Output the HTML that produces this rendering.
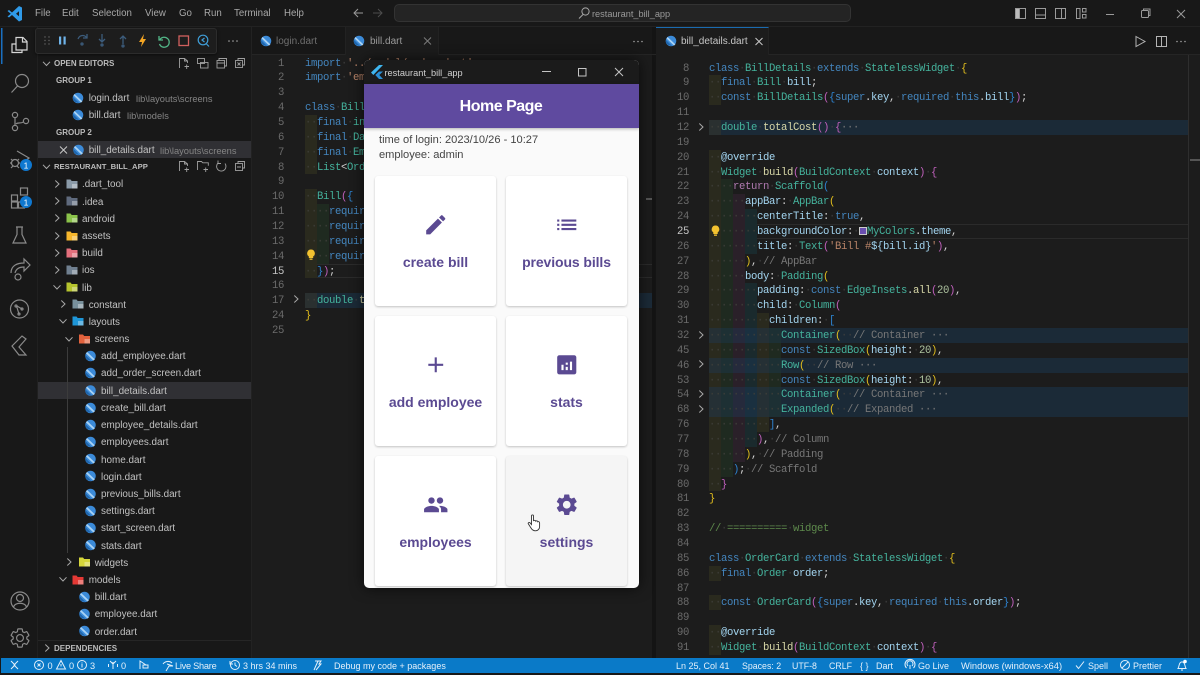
<!DOCTYPE html>
<html><head><meta charset="utf-8"><title>restaurant_bill_app</title>
<style>
*{box-sizing:border-box}
html,body{margin:0;padding:0;background:#181818}
#root{position:relative;width:1200px;height:675px;overflow:hidden;background:#181818;font-family:"Liberation Sans",sans-serif;filter:blur(.35px)}
.a{position:absolute}
.t{position:absolute;white-space:pre;line-height:14px;font-size:9.9px;color:#c2c2c2}
.h{font-weight:bold;font-size:8px;color:#bcbcbc}
.dim{color:#858585;font-size:9.3px}
.m{color:#a8a8a8;font-size:9.7px}
.s{color:#e4f0fa;font-size:9.2px}
.pane{position:absolute;font-family:"Liberation Mono",monospace;font-size:10.6px;letter-spacing:-.36px;color:#d4d4d4;overflow:hidden}
.r{height:14.87px;line-height:16.87px;position:relative;white-space:pre}
.r b{position:absolute;left:0;top:0;text-align:right;font-weight:normal;color:#6b6b6b;font-size:10.6px}
.r b.cur{color:#c6c6c6}
#L .r{padding-left:55px}#L .r b{width:34px}
#R .r{padding-left:53px}#R .r b{width:33px}
.fd{background:#1b2a37;background-clip:content-box}
.cl{box-shadow:none;background:linear-gradient(#2b2b2b,#2b2b2b) top/100% 1px no-repeat,linear-gradient(#2b2b2b,#2b2b2b) bottom/100% 1px no-repeat;background-origin:content-box;background-clip:content-box}
i{font-style:normal;display:inline-block;height:14.87px;vertical-align:top;color:#3f3f3a}
i.A{background:#2a2a1e}i.B{background:#1f2a20}i.C{background:#2a2029}i.D{background:#1a2a2d}
u{text-decoration:none;color:#3e3e3e}
.k{color:#4486bf}.c{color:#45b39d}.v{color:#a3d5f0}.f{color:#d8d8a8}.p{color:#cfcfcf}
.y{color:#e3bf1c}.mg{color:#c060bc}.bl{color:#2d84d2}.g{color:#777}.o{color:#b98468}.n{color:#adc29f}.gc{color:#5e8a4c}.kw2{color:#b07ab0}
.card{position:absolute;width:121px;height:130px;background:#fff;border-radius:3px;box-shadow:0 1px 2px rgba(0,0,0,.22)}
.lab{position:absolute;left:0;right:0;top:78px;text-align:center;font-weight:bold;font-size:14px;line-height:16px;color:#5b4a92}
.card svg{position:absolute;left:47.75px;top:35.75px}
</style></head>
<body><div id="root">

<!-- structure backgrounds -->
<div class="a" style="left:252px;top:54px;width:400px;height:604px;background:#1c1c1c"></div>
<div class="a" style="left:656px;top:54px;width:544px;height:604px;background:#1c1c1c"></div>
<div class="a" style="left:652px;top:27px;width:4px;height:631px;background:#141414"></div>
<div class="a" style="left:251px;top:27px;width:1px;height:631px;background:#222"></div>
<div class="a" style="left:37px;top:27px;width:1px;height:631px;background:#202020"></div>
<div class="a" style="left:252px;top:54px;width:948px;height:1px;background:#252525"></div>
<div class="a" style="left:0;top:26px;width:1200px;height:1px;background:#222"></div>
<!-- tabs -->
<div class="a" style="left:252px;top:27px;width:93px;height:27px;background:#171717"></div>
<div class="a" style="left:345px;top:27px;width:94px;height:28px;background:#1c1c1c;border-left:1px solid #222;border-right:1px solid #222"></div>
<div class="a" style="left:656px;top:27px;width:113px;height:28px;background:#1c1c1c;border-right:1px solid #222;border-top:1px solid #1a6bb0"></div>
<div class="t" style="left:276px;top:35px;color:#6f6f6f;font-size:10px">login.dart</div>
<div class="t" style="left:370px;top:35px;color:#9a9a9a;font-size:10px">bill.dart</div>
<div class="t" style="left:681px;top:35px;color:#c6c6c6;font-size:10px">bill_details.dart</div>
<!-- selected rows -->
<div class="a" style="left:38px;top:141px;width:213px;height:17px;background:#303034"></div>
<div class="a" style="left:38px;top:381.5px;width:213px;height:17px;background:#303034"></div>
<div class="a" style="left:38px;top:640px;width:213px;height:1px;background:#262626"></div>
<div class="a" style="left:67px;top:347px;width:1px;height:206px;background:#3c3c3c"></div>

<!-- menu -->
<div class="t m" style="left:35px;top:7px">File</div>
<div class="t m" style="left:62px;top:7px">Edit</div>
<div class="t m" style="left:92px;top:7px">Selection</div>
<div class="t m" style="left:145px;top:7px">View</div>
<div class="t m" style="left:179px;top:7px">Go</div>
<div class="t m" style="left:204px;top:7px">Run</div>
<div class="t m" style="left:234px;top:7px">Terminal</div>
<div class="t m" style="left:284px;top:7px">Help</div>
<div class="a" style="left:394px;top:4px;width:457px;height:18px;background:#242424;border:1px solid #333;border-radius:5px"></div>
<div class="t" style="left:592px;top:7px;color:#9a9a9a;font-size:9.2px">restaurant_bill_app</div>

<!-- debug toolbar -->
<div class="a" style="left:35px;top:28px;width:182px;height:26px;background:#1d1d1d;border:1px solid #2c2c2c;border-radius:3px;box-shadow:0 1px 3px rgba(0,0,0,.5)"></div>

<!-- sidebar text -->
<div class="t h" style="left:54px;top:56.5px">OPEN EDITORS</div>
<div class="t h" style="left:56px;top:73.5px">GROUP 1</div>
<div class="t" style="left:88.7px;top:91.5px">login.dart</div><div class="t dim" style="left:136px;top:91.5px">lib\layouts\screens</div>
<div class="t" style="left:88.7px;top:108.5px">bill.dart</div><div class="t dim" style="left:127px;top:108.5px">lib\models</div>
<div class="t h" style="left:56px;top:125.5px">GROUP 2</div>
<div class="t" style="left:88.7px;top:144px">bill_details.dart</div><div class="t dim" style="left:160px;top:144px">lib\layouts\screens</div>
<div class="t h" style="left:54px;top:160px;font-size:7.7px">RESTAURANT_BILL_APP</div>
<div class="a" style="left:0;top:1px;width:0;height:0">
<div class="t" style="left:82px;top:177px">.dart_tool</div>
<div class="t" style="left:82px;top:194.5px">.idea</div>
<div class="t" style="left:82px;top:211.5px">android</div>
<div class="t" style="left:82px;top:229px">assets</div>
<div class="t" style="left:82px;top:246px">build</div>
<div class="t" style="left:82px;top:263px">ios</div>
<div class="t" style="left:82px;top:280.5px">lib</div>
<div class="t" style="left:88.7px;top:297.5px">constant</div>
<div class="t" style="left:88.7px;top:315px">layouts</div>
<div class="t" style="left:94.7px;top:332px">screens</div>
<div class="t" style="left:101px;top:349px">add_employee.dart</div>
<div class="t" style="left:101px;top:366px">add_order_screen.dart</div>
<div class="t" style="left:101px;top:383.5px">bill_details.dart</div>
<div class="t" style="left:101px;top:401px">create_bill.dart</div>
<div class="t" style="left:101px;top:418px">employee_details.dart</div>
<div class="t" style="left:101px;top:435px">employees.dart</div>
<div class="t" style="left:101px;top:452.5px">home.dart</div>
<div class="t" style="left:101px;top:469.5px">login.dart</div>
<div class="t" style="left:101px;top:487px">previous_bills.dart</div>
<div class="t" style="left:101px;top:504px">settings.dart</div>
<div class="t" style="left:101px;top:521px">start_screen.dart</div>
<div class="t" style="left:101px;top:538.5px">stats.dart</div>
<div class="t" style="left:94.7px;top:555.5px">widgets</div>
<div class="t" style="left:88.7px;top:573px">models</div>
<div class="t" style="left:94.7px;top:590px">bill.dart</div>
<div class="t" style="left:94.7px;top:607px">employee.dart</div>
<div class="t" style="left:94.7px;top:624.5px">order.dart</div>
</div>
<div class="t h" style="left:54px;top:641.5px">DEPENDENCIES</div>

<!-- left code -->
<div class="pane" id="L" style="left:250px;top:55.5px;width:402px;height:300px">
<div class="r"><b>1</b><span class="k">import</span><u>·</u><span class="o">'../model/order.dart'</span><span class="p">;</span></div>
<div class="r"><b>2</b><span class="k">import</span><u>·</u><span class="o">'employee.dart'</span><span class="p">;</span></div>
<div class="r"><b>3</b></div>
<div class="r"><b>4</b><span class="k">class</span><u>·</u><span class="c">Bill</span><u>·</u><span class="y">{</span></div>
<div class="r"><b>5</b><i class="A">··</i><span class="k">final</span><u>·</u><span class="c">int</span><u>·</u><span class="v">id</span>;</div>
<div class="r"><b>6</b><i class="A">··</i><span class="k">final</span><u>·</u><span class="c">DateTime</span><u>·</u><span class="v">time</span>;</div>
<div class="r"><b>7</b><i class="A">··</i><span class="k">final</span><u>·</u><span class="c">Employee</span><u>·</u><span class="v">employee</span>;</div>
<div class="r"><b>8</b><i class="A">··</i><span class="c">List</span><span class="p">&lt;</span><span class="c">Order</span><span class="p">&gt;</span><u>·</u><span class="v">orders</span>;</div>
<div class="r"><b>9</b></div>
<div class="r"><b>10</b><i class="A">··</i><span class="c">Bill</span><span class="mg">(</span><span class="bl">{</span></div>
<div class="r"><b>11</b><i class="A">··</i><i class="B">··</i><span class="k">required</span><u>·</u><span class="k">this</span>.id,</div>
<div class="r"><b>12</b><i class="A">··</i><i class="B">··</i><span class="k">required</span><u>·</u><span class="k">this</span>.time,</div>
<div class="r"><b>13</b><i class="A">··</i><i class="B">··</i><span class="k">required</span><u>·</u><span class="k">this</span>.employee,</div>
<div class="r"><b>14</b><i class="A">··</i><i class="B">··</i><span class="k">required</span><u>·</u><span class="k">this</span>.orders,</div>
<div class="r cl"><b class="cur">15</b><i class="A">··</i><span class="bl">}</span><span class="mg">)</span><span class="p">;</span></div>
<div class="r"><b>16</b></div>
<div class="r fd"><b>17</b><i class="A" style="background:#2a3030">··</i><span class="c">double</span><u>·</u><span class="f">totalCost</span><span class="mg">()</span><u>·</u><span class="mg">{</span><span class="g">···</span></div>
<div class="r"><b>24</b><span class="y">}</span></div>
<div class="r"><b>25</b></div>
</div>

<!-- right code -->
<div class="pane" id="R" style="left:656px;top:60.5px;width:532px;height:597px">
<div class="r"><b>8</b><span class="k">class</span><u>·</u><span class="c">BillDetails</span><u>·</u><span class="k">extends</span><u>·</u><span class="c">StatelessWidget</span><u>·</u><span class="y">{</span></div>
<div class="r"><b>9</b><i class="A">··</i><span class="k">final</span><u>·</u><span class="c">Bill</span><u>·</u><span class="v">bill</span>;</div>
<div class="r"><b>10</b><i class="A">··</i><span class="k">const</span><u>·</u><span class="c">BillDetails</span><span class="mg">(</span><span class="bl">{</span><span class="k">super</span>.<span class="v">key</span>,<u>·</u><span class="k">required</span><u>·</u><span class="k">this</span>.<span class="v">bill</span><span class="bl">}</span><span class="mg">)</span>;</div>
<div class="r"><b>11</b></div>
<div class="r fd"><b>12</b><i class="A" style="background:#2a3030">··</i><span class="c">double</span><u>·</u><span class="f">totalCost</span><span class="mg">()</span><u>·</u><span class="mg">{</span><span class="g">···</span></div>
<div class="r"><b>19</b></div>
<div class="r"><b>20</b><i class="A">··</i><span class="v">@override</span></div>
<div class="r"><b>21</b><i class="A">··</i><span class="c">Widget</span><u>·</u><span class="f">build</span><span class="mg">(</span><span class="c">BuildContext</span><u>·</u><span class="v">context</span><span class="mg">)</span><u>·</u><span class="mg">{</span></div>
<div class="r"><b>22</b><i class="A">··</i><i class="B">··</i><span class="kw2">return</span><u>·</u><span class="c">Scaffold</span><span class="bl">(</span></div>
<div class="r"><b>23</b><i class="A">··</i><i class="B">··</i><i class="C">··</i><span class="v">appBar</span>:<u>·</u><span class="c">AppBar</span><span class="y">(</span></div>
<div class="r"><b>24</b><i class="A">··</i><i class="B">··</i><i class="C">··</i><i class="D">··</i><span class="v">centerTitle</span>:<u>·</u><span class="k">true</span>,</div>
<div class="r cl"><b class="cur">25</b><i class="A">··</i><i class="B">··</i><i class="C">··</i><i class="D">··</i><span class="v">backgroundColor</span>:<u>·</u><span style="display:inline-block;width:8px;height:8px;background:#6a4fb0;border:1px solid #ccc;margin:0 1px 0 0;vertical-align:-1px"></span><span class="c" style="margin-left:-1px">MyColors</span>.<span class="v">theme</span>,</div>
<div class="r"><b>26</b><i class="A">··</i><i class="B">··</i><i class="C">··</i><i class="D">··</i><span class="v">title</span>:<u>·</u><span class="c">Text</span><span class="mg">(</span><span class="o">'Bill #</span><span class="v">${bill.id}</span><span class="o">'</span><span class="mg">)</span>,</div>
<div class="r"><b>27</b><i class="A">··</i><i class="B">··</i><i class="C">··</i><span class="y">)</span>,<u>·</u><span class="g">// AppBar</span></div>
<div class="r"><b>28</b><i class="A">··</i><i class="B">··</i><i class="C">··</i><span class="v">body</span>:<u>·</u><span class="c">Padding</span><span class="y">(</span></div>
<div class="r"><b>29</b><i class="A">··</i><i class="B">··</i><i class="C">··</i><i class="D">··</i><span class="v">padding</span>:<u>·</u><span class="k">const</span><u>·</u><span class="c">EdgeInsets</span>.<span class="f">all</span><span class="mg">(</span><span class="n">20</span><span class="mg">)</span>,</div>
<div class="r"><b>30</b><i class="A">··</i><i class="B">··</i><i class="C">··</i><i class="D">··</i><span class="v">child</span>:<u>·</u><span class="c">Column</span><span class="mg">(</span></div>
<div class="r"><b>31</b><i class="A">··</i><i class="B">··</i><i class="C">··</i><i class="D">··</i><i class="A">··</i><span class="v">children</span>:<u>·</u><span class="bl">[</span></div>
<div class="r fd"><b>32</b><i class="A" style="background:#253035">··</i><i class="B" style="background:#1d3034">··</i><i class="C" style="background:#252a3c">··</i><i class="D" style="background:#1a3040">··</i><i class="A" style="background:#253035">··</i><i class="B" style="background:#1d3034">··</i><span class="c">Container</span><span class="y">(</span><u>··</u><span class="g">// Container ···</span></div>
<div class="r"><b>45</b><i class="A">··</i><i class="B">··</i><i class="C">··</i><i class="D">··</i><i class="A">··</i><i class="B">··</i><span class="k">const</span><u>·</u><span class="c">SizedBox</span><span class="y">(</span><span class="v">height</span>:<u>·</u><span class="n">20</span><span class="y">)</span>,</div>
<div class="r fd"><b>46</b><i class="A" style="background:#253035">··</i><i class="B" style="background:#1d3034">··</i><i class="C" style="background:#252a3c">··</i><i class="D" style="background:#1a3040">··</i><i class="A" style="background:#253035">··</i><i class="B" style="background:#1d3034">··</i><span class="c">Row</span><span class="y">(</span><u>··</u><span class="g">// Row ···</span></div>
<div class="r"><b>53</b><i class="A">··</i><i class="B">··</i><i class="C">··</i><i class="D">··</i><i class="A">··</i><i class="B">··</i><span class="k">const</span><u>·</u><span class="c">SizedBox</span><span class="y">(</span><span class="v">height</span>:<u>·</u><span class="n">10</span><span class="y">)</span>,</div>
<div class="r fd"><b>54</b><i class="A" style="background:#253035">··</i><i class="B" style="background:#1d3034">··</i><i class="C" style="background:#252a3c">··</i><i class="D" style="background:#1a3040">··</i><i class="A" style="background:#253035">··</i><i class="B" style="background:#1d3034">··</i><span class="c">Container</span><span class="y">(</span><u>··</u><span class="g">// Container ···</span></div>
<div class="r fd"><b>68</b><i class="A" style="background:#253035">··</i><i class="B" style="background:#1d3034">··</i><i class="C" style="background:#252a3c">··</i><i class="D" style="background:#1a3040">··</i><i class="A" style="background:#253035">··</i><i class="B" style="background:#1d3034">··</i><span class="c">Expanded</span><span class="y">(</span><u>··</u><span class="g">// Expanded ···</span></div>
<div class="r"><b>76</b><i class="A">··</i><i class="B">··</i><i class="C">··</i><i class="D">··</i><i class="A">··</i><span class="bl">]</span>,</div>
<div class="r"><b>77</b><i class="A">··</i><i class="B">··</i><i class="C">··</i><i class="D">··</i><span class="mg">)</span>,<u>·</u><span class="g">// Column</span></div>
<div class="r"><b>78</b><i class="A">··</i><i class="B">··</i><i class="C">··</i><span class="y">)</span>,<u>·</u><span class="g">// Padding</span></div>
<div class="r"><b>79</b><i class="A">··</i><i class="B">··</i><span class="bl">)</span>;<u>·</u><span class="g">// Scaffold</span></div>
<div class="r"><b>80</b><i class="A">··</i><span class="mg">}</span></div>
<div class="r"><b>81</b><span class="y">}</span></div>
<div class="r"><b>82</b></div>
<div class="r"><b>83</b><span class="gc">//<u>·</u>==========<u>·</u>widget</span></div>
<div class="r"><b>84</b></div>
<div class="r"><b>85</b><span class="k">class</span><u>·</u><span class="c">OrderCard</span><u>·</u><span class="k">extends</span><u>·</u><span class="c">StatelessWidget</span><u>·</u><span class="y">{</span></div>
<div class="r"><b>86</b><i class="A">··</i><span class="k">final</span><u>·</u><span class="c">Order</span><u>·</u><span class="v">order</span>;</div>
<div class="r"><b>87</b></div>
<div class="r"><b>88</b><i class="A">··</i><span class="k">const</span><u>·</u><span class="c">OrderCard</span><span class="mg">(</span><span class="bl">{</span><span class="k">super</span>.<span class="v">key</span>,<u>·</u><span class="k">required</span><u>·</u><span class="k">this</span>.<span class="v">order</span><span class="bl">}</span><span class="mg">)</span>;</div>
<div class="r"><b>89</b></div>
<div class="r"><b>90</b><i class="A">··</i><span class="v">@override</span></div>
<div class="r"><b>91</b><i class="A">··</i><span class="c">Widget</span><u>·</u><span class="f">build</span><span class="mg">(</span><span class="c">BuildContext</span><u>·</u><span class="v">context</span><span class="mg">)</span><u>·</u><span class="mg">{</span></div>
</div>
<div class="a" style="left:1188px;top:55px;width:1px;height:603px;background:#2e2e2e"></div>
<div class="a" style="left:1190px;top:159px;width:10px;height:2px;background:#555"></div>
<div class="a" style="left:646px;top:198px;width:6px;height:2px;background:#555"></div>

<!-- icon layer -->
<svg class="a" style="left:0;top:0" width="1200" height="675" viewBox="0 0 1200 675" fill="none">
<defs>
<symbol id="d" viewBox="0 0 12 12"><circle cx="6" cy="6" r="5.3" fill="#3b8ad8"/><path d="M2.6 2 L10.4 9.4 L9 10.6 L1.5 3.4z" fill="#a9d3f5"/><path d="M1 5 L7 11 L3 10 L1 8z" fill="#1f66ad"/></symbol>
<symbol id="cr" viewBox="0 0 10 10"><path d="M3.3 1.5 L7 5 L3.3 8.5" fill="none" stroke="#a8a8a8" stroke-width="1"/></symbol>
<symbol id="cd" viewBox="0 0 10 10"><path d="M1.5 3.3 L5 7 L8.5 3.3" fill="none" stroke="#a8a8a8" stroke-width="1"/></symbol>
<symbol id="fo" viewBox="0 0 12 12"><path d="M.5 1.5h4l1.2 1.5h5.8v7.5H.5z" fill="currentColor"/><rect x="6" y="6" width="5.5" height="4.5" fill="#fff" opacity=".35"/></symbol>
<symbol id="x" viewBox="0 0 10 10"><path d="M1.5 1.5 L8.5 8.5 M8.5 1.5 L1.5 8.5" stroke="currentColor" stroke-width="1"/></symbol>
</defs>

<!-- title bar -->
<path d="M9 10 L12 12.5 L19 6 L22 7.5 V20 L19 21.5 L12 15 L9 17.5 L7.5 16.5 L10.8 13.7 L7.5 11z" fill="#2f9ae8"/>
<path d="M16 13.7 L19 11.2 V16.2z" fill="#181818"/>
<g stroke="#9a9a9a" stroke-width="1"><path d="M354 13h9M358 9l-4 4 4 4"/></g>
<g stroke="#4d4d4d" stroke-width="1"><path d="M373 13h9M378 9l4 4-4 4"/></g>
<g stroke="#a8a8a8" stroke-width="1"><circle cx="585.5" cy="11.5" r="3.6"/><path d="M583 14.5 L579 18.5"/></g>
<g stroke="#9a9a9a" stroke-width="1"><rect x="1015.5" y="8.5" width="10" height="10"/><rect x="1015.5" y="8.5" width="4" height="10" fill="#bbb"/><rect x="1035.5" y="8.5" width="10" height="10"/><path d="M1035.5 15h10"/><rect x="1055.5" y="8.5" width="10" height="10"/><path d="M1061.5 8.5v10"/><rect x="1076.5" y="8.5" width="3.5" height="10"/><rect x="1082.5" y="8.5" width="3.5" height="3.5"/><rect x="1082.5" y="14.5" width="3.5" height="3.5"/><path d="M1106 14.5h8"/></g>
<g stroke="#9a9a9a" stroke-width="1"><rect x="1141.5" y="10.5" width="7" height="7" rx="1"/><path d="M1143.5 10.5v-1.5h6.5v6.5h-1.5"/><path d="M1177 10l8 8M1185 10l-8 8"/></g>

<!-- activity bar -->
<rect x="1" y="28" width="1.5" height="36" fill="#1a6fc0"/>
<g stroke="#d6d6d6" stroke-width="1.2"><path d="M16 44 H12 V52.5 H22 V50"/><path d="M16 37.5 H23 L27 41.5 V50 H16z"/><path d="M22.5 37.5 V42 H27"/></g>
<g stroke="#8a8a8a" stroke-width="1.2">
<circle cx="22" cy="81" r="6.5"/><path d="M17.5 86 L11.5 92.5"/>
<circle cx="15" cy="115" r="2.6"/><circle cx="15" cy="128" r="2.6"/><circle cx="26" cy="121" r="2.6"/><path d="M15 118v7.5M23.5 122 C20 124 17.5 122 16 124"/>
<path d="M17 151 L29 158 L22 163"/><circle cx="15" cy="163" r="3.5"/><path d="M10 163h2M18 163h2M11 159l2 2M19 159l-2 2M11 168l2-2M19 168l-2-2"/>
<rect x="11.5" y="195" width="6" height="6"/><rect x="11.5" y="202" width="6" height="6"/><rect x="18.5" y="202" width="6" height="6"/><rect x="20.5" y="188" width="7" height="7"/>
<path d="M16 227h7M17 227v7.5L13 243h13l-4-8.5V227"/>
<path d="M11 273 C11 265 18 263 24 263V259l6 6-6 6v-4 C19 267 16 269 15 273"/><circle cx="18" cy="277" r="3"/>
<circle cx="19.5" cy="309" r="9"/><circle cx="16" cy="306" r="1"/><circle cx="22" cy="309" r="1"/><circle cx="19" cy="314" r="1"/><path d="M16.5 306 L19 314M17 306 L22 309"/>
<path d="M22 336 L12 346 L19 355 H26 L19 347 L26 339z"/>
<circle cx="20" cy="601" r="9"/><circle cx="20" cy="598" r="3.5"/><path d="M13.5 607 C15 602 25 602 26.5 607"/>
<path transform="translate(8.6 626.6) scale(.95)" stroke-width="1.25" d="M19.14 12.94c.04-.3.06-.61.06-.94 0-.32-.02-.64-.07-.94l2.03-1.58c.18-.14.23-.41.12-.61l-1.92-3.32c-.12-.22-.37-.29-.59-.22l-2.39.96c-.5-.38-1.03-.7-1.62-.94l-.36-2.54c-.04-.24-.24-.41-.48-.41h-3.84c-.24 0-.43.17-.47.41l-.36 2.54c-.59.24-1.13.57-1.62.94l-2.39-.96c-.22-.08-.47 0-.59.22L2.74 8.87c-.12.21-.08.47.12.61l2.03 1.58c-.05.3-.09.63-.09.94s.02.64.07.94l-2.03 1.58c-.18.14-.23.41-.12.61l1.92 3.32c.12.22.37.29.59.22l2.39-.96c.5.38 1.03.7 1.62.94l.36 2.54c.05.24.24.41.48.41h3.84c.24 0 .44-.17.47-.41l.36-2.54c.59-.24 1.13-.56 1.62-.94l2.39.96c.22.08.47 0 .59-.22l1.92-3.32c.12-.22.07-.47-.12-.61l-2.01-1.58zM12 15.6c-1.98 0-3.6-1.62-3.6-3.6s1.62-3.6 3.6-3.6 3.6 1.62 3.6 3.6-1.62 3.6-3.6 3.6z"/></g>
<circle cx="26" cy="165" r="6" fill="#0f78d0"/><circle cx="26" cy="202" r="6" fill="#0f78d0"/>
<text x="26" y="168.5" text-anchor="middle" fill="#fff" font-family="Liberation Sans" font-size="8.5">1</text>
<text x="26" y="205.5" text-anchor="middle" fill="#fff" font-family="Liberation Sans" font-size="8.5">1</text>

<!-- debug toolbar icons -->
<g fill="#666"><circle cx="45" cy="37" r=".7"/><circle cx="49" cy="37" r=".7"/><circle cx="45" cy="40.5" r=".7"/><circle cx="49" cy="40.5" r=".7"/><circle cx="45" cy="44" r=".7"/><circle cx="49" cy="44" r=".7"/></g>
<rect x="59" y="36.5" width="2.2" height="8" fill="#6fb4ea"/><rect x="63.5" y="36.5" width="2.2" height="8" fill="#6fb4ea"/>
<g stroke="#3c5c7c" stroke-width="1.3"><path d="M78 39 C80 34 85 35 87 38M87 34v4h-4"/><circle cx="82" cy="44" r="1"/><path d="M102 34v8M99 39l3 3 3-3"/><circle cx="102" cy="45" r="1"/><path d="M123 44v-8M120 39l3-3 3 3"/><circle cx="123" cy="46" r="1"/></g>
<path d="M144 34 L139 42 H142 L141 47 L146 39 H143z" fill="#f5a623"/>
<path d="M159 36 V40 H163 M160 39.5 A5 5 0 1 1 159.5 44" stroke="#52b788" stroke-width="1.3"/>
<rect x="179" y="36" width="9.5" height="9.5" stroke="#d0605e" stroke-width="1.3"/>
<g stroke="#3f9ed8" stroke-width="1.2"><circle cx="203" cy="40" r="4.8"/><path d="M206.5 44 L209 46.5M204.5 38 L202 40 L204.5 42"/></g>
<g fill="#a8a8a8"><circle cx="229" cy="41" r=".8"/><circle cx="233" cy="41" r=".8"/><circle cx="237" cy="41" r=".8"/></g>

<!-- sidebar toolbar -->
<g stroke="#a0a0a0" stroke-width=".9">
<path d="M179.5 68 V58.5 H184.5 L187.5 61 V63 M184.5 58.5V61H187.5M184.5 66.5h4.5M186.7 64.5v4.5"/>
<rect x="197.5" y="58.5" width="7" height="5"/><rect x="200.5" y="62.5" width="7.5" height="5.5"/>
<rect x="217" y="60.5" width="7.5" height="7.5"/><path d="M219 60.5V58.5h7.5v7.5h-2M217 63h7.5"/>
<rect x="235.5" y="60.5" width="7" height="7"/><path d="M238 60.5V58.5h6.5v6.5h-2M237.5 62.5l3 3M240.5 62.5l-3 3"/>
<path d="M179.5 171 V161.5 H184.5 L187.5 164 V166 M184.5 161.5V164H187.5M184.5 169.5h4.5M186.7 167.5v4.5"/>
<path d="M197.5 170 V161.5H201.5l1.3 1.3h5.5v3M203.5 169.5h4.5M205.7 167.5v4.5"/>
<path d="M218 163 A4.7 4.7 0 1 0 225 163.5M218 160.5v3h3"/>
<rect x="235.5" y="163.5" width="7" height="7"/><path d="M238 163.5V161.5h6.5v6.5h-2M237 167h4"/>
</g>
<use href="#cd" x="41.5" y="58.5" width="10" height="10"/><use href="#cd" x="41.5" y="161.5" width="10" height="10"/><use href="#cr" x="42" y="643" width="10" height="10"/>
<use href="#d" x="72" y="92" width="12" height="12"/><use href="#d" x="72" y="109" width="12" height="12"/><use href="#d" x="72.5" y="144" width="12" height="12"/>
<use href="#x" x="58.5" y="145" width="10" height="10" style="color:#c8c8c8"/>
<use href="#d" x="260" y="35" width="12" height="12"/><use href="#d" x="353" y="35" width="12" height="12"/><use href="#d" x="665" y="35" width="12" height="12"/>
<use href="#x" x="422.5" y="36" width="10" height="10" style="color:#7a7a7a"/><use href="#x" x="754" y="36.5" width="10" height="10" style="color:#c8c8c8"/>
<g fill="#a0a0a0"><circle cx="634" cy="41.5" r=".8"/><circle cx="638" cy="41.5" r=".8"/><circle cx="642" cy="41.5" r=".8"/><circle cx="1177" cy="41.5" r=".8"/><circle cx="1181" cy="41.5" r=".8"/><circle cx="1185" cy="41.5" r=".8"/></g>
<path d="M1136 36.5 L1145 41.5 L1136 46.5z" stroke="#b4b4b4" stroke-width="1"/>
<rect x="1156.5" y="36.5" width="10" height="10" stroke="#b4b4b4"/><path d="M1161.5 36.5v10" stroke="#b4b4b4"/>

<!-- tree chevrons -->
<use href="#cr" x="52" y="179" width="10" height="10"/><use href="#cr" x="52" y="196" width="10" height="10"/><use href="#cr" x="52" y="213" width="10" height="10"/><use href="#cr" x="52" y="231" width="10" height="10"/><use href="#cr" x="52" y="248" width="10" height="10"/><use href="#cr" x="52" y="265" width="10" height="10"/><use href="#cd" x="52" y="282" width="10" height="10"/><use href="#cr" x="58" y="299" width="10" height="10"/><use href="#cd" x="58" y="316" width="10" height="10"/><use href="#cd" x="64" y="334" width="10" height="10"/><use href="#cr" x="64" y="557" width="10" height="10"/><use href="#cd" x="58" y="574" width="10" height="10"/>
<!-- folders -->
<use href="#fo" x="66" y="178" width="12" height="12" style="color:#8a9aa8"/><use href="#fo" x="66" y="195" width="12" height="12" style="color:#5f6a7d"/><use href="#fo" x="66" y="212" width="12" height="12" style="color:#8bc34a"/><use href="#fo" x="66" y="230" width="12" height="12" style="color:#f6b62c"/><use href="#fo" x="66" y="247" width="12" height="12" style="color:#e36f7c"/><use href="#fo" x="66" y="264" width="12" height="12" style="color:#708090"/><use href="#fo" x="66" y="281" width="12" height="12" style="color:#b6c42e"/><use href="#fo" x="72" y="298" width="12" height="12" style="color:#78909c"/><use href="#fo" x="72" y="315" width="12" height="12" style="color:#1e96d8"/><use href="#fo" x="78.5" y="333" width="12" height="12" style="color:#e2623d"/><use href="#fo" x="78.5" y="556" width="12" height="12" style="color:#d6d63a"/><use href="#fo" x="72" y="574" width="12" height="12" style="color:#e53935"/>
<!-- files -->
<use href="#d" x="84.5" y="350" width="12" height="12"/><use href="#d" x="84.5" y="367" width="12" height="12"/><use href="#d" x="84.5" y="384.5" width="12" height="12"/><use href="#d" x="84.5" y="402" width="12" height="12"/><use href="#d" x="84.5" y="419" width="12" height="12"/><use href="#d" x="84.5" y="436" width="12" height="12"/><use href="#d" x="84.5" y="453" width="12" height="12"/><use href="#d" x="84.5" y="470" width="12" height="12"/><use href="#d" x="84.5" y="488" width="12" height="12"/><use href="#d" x="84.5" y="505" width="12" height="12"/><use href="#d" x="84.5" y="522" width="12" height="12"/><use href="#d" x="84.5" y="539" width="12" height="12"/><use href="#d" x="78.5" y="591" width="12" height="12"/><use href="#d" x="78.5" y="608" width="12" height="12"/><use href="#d" x="78.5" y="625" width="12" height="12"/>
<!-- code fold + bulbs -->
<use href="#cr" x="291" y="294" width="10" height="10"/><use href="#cr" x="696" y="122" width="10" height="10"/><use href="#cr" x="696" y="330" width="10" height="10"/><use href="#cr" x="696" y="359" width="10" height="10"/><use href="#cr" x="696" y="389" width="10" height="10"/><use href="#cr" x="696" y="404" width="10" height="10"/>
<g fill="#f2c230"><path d="M311 249.5a3.8 3.8 0 0 1 2.2 6.9v1.6h-4.4v-1.6A3.8 3.8 0 0 1 311 249.5z"/><path d="M715.5 225.5a3.8 3.8 0 0 1 2.2 6.9v1.6h-4.4v-1.6A3.8 3.8 0 0 1 715.5 225.5z"/></g>
<rect x="309.5" y="258.5" width="3" height="1.3" fill="#f2c230"/><rect x="714" y="234.5" width="3" height="1.3" fill="#f2c230"/>
</svg>

<!-- flutter window -->
<div class="a" style="left:363.5px;top:60px;width:275px;height:528px;background:#fafafa;border-radius:5px;overflow:hidden;box-shadow:0 0 14px rgba(0,0,0,.65)">
<div class="a" style="left:0;top:0;width:275px;height:24px;background:#1b1b1b"></div>
<div class="t" style="left:21px;top:5.5px;color:#d0d0d0;font-size:9.2px">restaurant_bill_app</div>
<svg class="a" style="left:7px;top:5px" width="13" height="14" viewBox="0 0 13 14"><path d="M8 0 L0 7.5 2.3 10 L12 0z" fill="#3fb6f0"/><path d="M12 6.5 H8 L4.3 10 8 14 H12 L8.3 10z" fill="#2a8fd6"/></svg>
<svg class="a" style="left:0;top:0" width="275" height="24" fill="none" stroke="#c4c4c4" stroke-width="1"><path d="M178 11.5h9"/><rect x="214.5" y="8.5" width="7.5" height="7.5"/><path d="M251 8l8 8M259 8l-8 8"/></svg>
<div class="a" style="left:0;top:24px;width:275px;height:43.5px;background:#5f4a9f;box-shadow:0 1px 3px rgba(0,0,0,.3)"></div>
<div class="a" style="left:0;top:37px;width:275px;text-align:center;color:#fff;font-weight:bold;font-size:16px;line-height:20px;letter-spacing:-.5px">Home Page</div>
<div class="t" style="left:15.5px;top:73px;color:#444;font-size:11.1px">time of login: 2023/10/26 - 10:27</div>
<div class="t" style="left:15.5px;top:88px;color:#444;font-size:11.1px">employee: admin</div>

<div class="card" style="left:11.5px;top:116px"><svg width="25.5" height="25.5" viewBox="0 0 24 24" fill="#5b4a92"><path d="M3 17.25V21h3.75L17.81 9.94l-3.75-3.75L3 17.25zM20.71 7.04c.39-.39.39-1.02 0-1.41l-2.34-2.34c-.39-.39-1.02-.39-1.41 0l-1.83 1.83 3.75 3.75 1.83-1.83z"/></svg><div class="lab">create bill</div></div>
<div class="card" style="left:142.5px;top:116px"><svg width="25.5" height="25.5" viewBox="0 0 24 24" fill="#5b4a92"><path d="M3 13h2v-2H3v2zm0 4h2v-2H3v2zm0-8h2V7H3v2zm4 4h14v-2H7v2zm0 4h14v-2H7v2zM7 7v2h14V7H7z"/></svg><div class="lab" style="letter-spacing:-.1px">previous bills</div></div>
<div class="card" style="left:11.5px;top:256px"><svg width="25.5" height="25.5" viewBox="0 0 24 24" fill="#5b4a92"><path d="M19 13h-6v6h-2v-6H5v-2h6V5h2v6h6v2z"/></svg><div class="lab">add employee</div></div>
<div class="card" style="left:142.5px;top:256px"><svg width="25.5" height="25.5" viewBox="0 0 24 24" fill="#5b4a92"><path d="M19 3H5c-1.1 0-2 .9-2 2v14c0 1.1.9 2 2 2h14c1.1 0 2-.9 2-2V5c0-1.1-.9-2-2-2zM9 17H7v-5h2v5zm4 0h-2v-3h2v3zm0-5h-2v-2h2v2zm4 5h-2V9h2v8z"/></svg><div class="lab">stats</div></div>
<div class="card" style="left:11.5px;top:396px"><svg width="25.5" height="25.5" viewBox="0 0 24 24" fill="#5b4a92"><path d="M16 11c1.66 0 2.99-1.34 2.99-3S17.66 5 16 5c-1.66 0-3 1.34-3 3s1.34 3 3 3zm-8 0c1.66 0 2.99-1.34 2.99-3S9.66 5 8 5C6.34 5 5 6.34 5 8s1.34 3 3 3zm0 2c-2.33 0-7 1.17-7 3.5V19h14v-2.5c0-2.33-4.67-3.5-7-3.5zm8 0c-.29 0-.62.02-.97.05 1.16.84 1.97 1.97 1.97 3.45V19h6v-2.5c0-2.33-4.67-3.5-7-3.5z"/></svg><div class="lab">employees</div></div>
<div class="card" style="left:142.5px;top:396px;background:#f5f5f5"><svg width="25.5" height="25.5" viewBox="0 0 24 24" fill="#5b4a92"><path d="M19.14 12.94c.04-.3.06-.61.06-.94 0-.32-.02-.64-.07-.94l2.03-1.58c.18-.14.23-.41.12-.61l-1.92-3.32c-.12-.22-.37-.29-.59-.22l-2.39.96c-.5-.38-1.03-.7-1.62-.94l-.36-2.54c-.04-.24-.24-.41-.48-.41h-3.84c-.24 0-.43.17-.47.41l-.36 2.54c-.59.24-1.13.57-1.62.94l-2.39-.96c-.22-.08-.47 0-.59.22L2.74 8.87c-.12.21-.08.47.12.61l2.03 1.58c-.05.3-.09.63-.09.94s.02.64.07.94l-2.03 1.58c-.18.14-.23.41-.12.61l1.92 3.32c.12.22.37.29.59.22l2.39-.96c.5.38 1.03.7 1.62.94l.36 2.54c.05.24.24.41.48.41h3.84c.24 0 .44-.17.47-.41l.36-2.54c.59-.24 1.13-.56 1.62-.94l2.39.96c.22.08.47 0 .59-.22l1.92-3.32c.12-.22.07-.47-.12-.61l-2.01-1.58zM12 15.6c-1.98 0-3.6-1.62-3.6-3.6s1.62-3.6 3.6-3.6 3.6 1.62 3.6 3.6-1.62 3.6-3.6 3.6z"/></svg><div class="lab">settings</div></div>
<svg class="a" style="left:163px;top:454px" width="14" height="18" viewBox="0 0 14 18"><path d="M4.5 2 C4.5 .6 6.5 .6 6.5 2 V7 C7 6 8.5 6 8.8 7.2 C9.3 6.5 10.6 6.7 10.8 7.8 C11.4 7.3 12.6 7.7 12.6 9 V12.5 C12.6 15 11 16.8 8.5 16.8 C6 16.8 5 15.8 4 14 L1.3 9.8 C.8 8.8 2.2 8 3 8.8 L4.5 10.5z" fill="#fff" stroke="#333" stroke-width=".9"/></svg>
</div>

<!-- status bar -->
<div class="a" style="left:1px;top:658px;width:1199px;height:15px;background:#0a7ac8"></div>
<div class="t s" style="left:47.5px;top:658.5px">0</div><div class="t s" style="left:69px;top:658.5px">0</div><div class="t s" style="left:90px;top:658.5px">3</div>
<div class="t s" style="left:121px;top:658.5px">0</div>
<div class="t s" style="left:175px;top:658.5px;letter-spacing:-.25px">Live Share</div>
<div class="t s" style="left:243px;top:658.5px;font-size:9px">3 hrs 34 mins</div>
<div class="t s" style="left:334px;top:658.5px;font-size:9px">Debug my code + packages</div>
<div class="t s" style="left:676px;top:658.5px;font-size:9px">Ln 25, Col 41</div>
<div class="t s" style="left:742px;top:658.5px;font-size:8.8px">Spaces: 2</div>
<div class="t s" style="left:792px;top:658.5px;font-size:8.8px">UTF-8</div>
<div class="t s" style="left:829px;top:658.5px;font-size:8.8px">CRLF</div>
<div class="t s" style="left:860px;top:658.5px;font-size:9px">{ }</div>
<div class="t s" style="left:876px;top:658.5px;font-size:9px">Dart</div>
<div class="t s" style="left:918px;top:658.5px;font-size:9px">Go Live</div>
<div class="t s" style="left:961px;top:658.5px;font-size:9.4px">Windows (windows-x64)</div>
<div class="t s" style="left:1088px;top:658.5px;font-size:9px">Spell</div>
<div class="t s" style="left:1133px;top:658.5px;font-size:9px">Prettier</div>
<svg class="a" style="left:0;top:658px" width="1200" height="15" viewBox="0 658 1200 15" fill="none" stroke="#e4f0fa" stroke-width="1">
<path d="M11 661 L15 665 L11 669M18 661 L14 665 L18 669"/>
<circle cx="39" cy="665" r="4.5"/><path d="M37.5 663.5l3 3M40.5 663.5l-3 3"/>
<path d="M61 660.5 L65.5 669 H56.5z"/><path d="M61 664v2.5"/>
<circle cx="82" cy="665" r="4.5"/><path d="M82 664v3.5M82 662.5v1"/>
<path d="M113 662v7M110 661l3 3 3-3M108.5 664v3M117.5 664v3"/>
<path d="M140 669 V661 L146 665M143 668h5v-3h-5z"/>
<path d="M163 664 A6 6 0 0 1 172 663M166 671 L169 666 H173 L167 664"/>
<circle cx="235" cy="665" r="4.5"/><path d="M235 662.5V665l2 1.5M230 661v3h3"/>
<path d="M314 670 L318 661 M315 661h6l-2 3h2l-5 6"/>
<path d="M1076 665.5l2.5 3 5.5-7"/>
<circle cx="1125" cy="665" r="4.5"/><path d="M1122 668l6-6"/>
<path d="M910 669v-4M906.5 668 A5 5 0 1 1 913.5 668M908 666 A3 3 0 1 1 912 666"/>
<path d="M1178 668.5 C1179 667 1179 664 1180 663 C1181 661.5 1183 661.5 1184 663 C1185 664 1185 667 1186 668.5z M1181 670h2"/><circle cx="1185" cy="661.5" r="1.8" fill="#fff" stroke="none"/>
</svg>
</div></body></html>
